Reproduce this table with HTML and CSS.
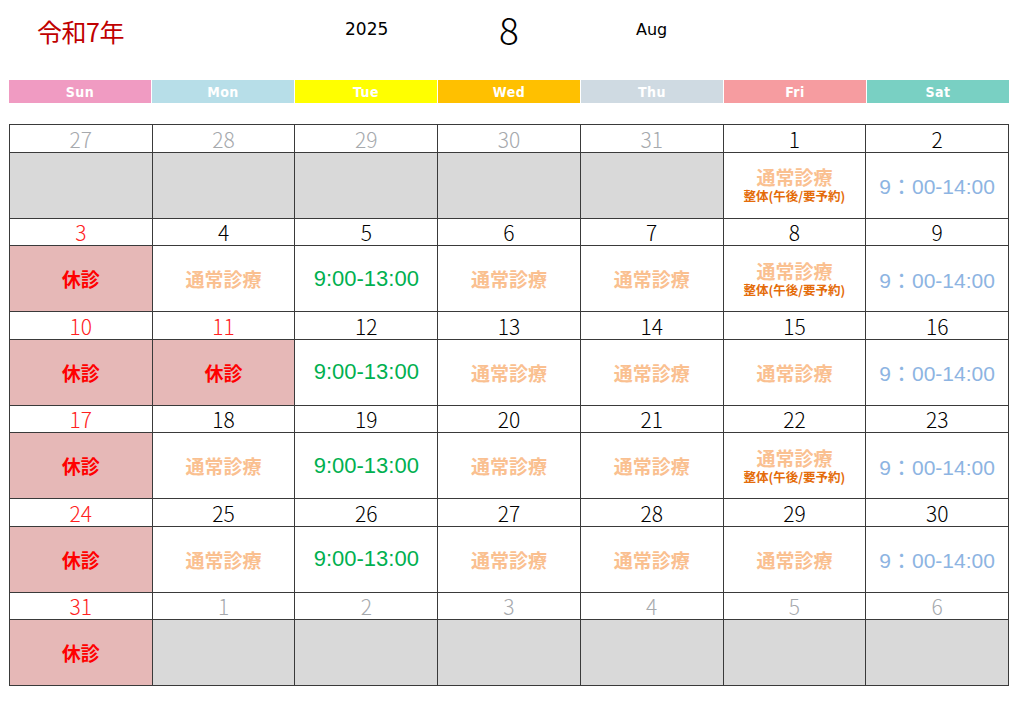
FILE: index.html
```html
<!DOCTYPE html>
<html lang="ja">
<head>
<meta charset="utf-8">
<title>令和7年 8月 カレンダー</title>
<link rel="stylesheet" href="styles.css">
</head>
<body>
<div class="page">
  <div class="title-row">
    <div class="era">令和7年</div>
    <div class="year">2025</div>
    <div class="month">8</div>
    <div class="month-en">Aug</div>
  </div>

  <div class="weekdays">
    <div class="wd sun">Sun</div>
    <div class="wd mon">Mon</div>
    <div class="wd tue">Tue</div>
    <div class="wd wed">Wed</div>
    <div class="wd thu">Thu</div>
    <div class="wd fri">Fri</div>
    <div class="wd sat">Sat</div>
  </div>

  <div class="cal">
    <!-- week 1 -->
    <div class="date other">27</div><div class="date other">28</div><div class="date other">29</div><div class="date other">30</div><div class="date other">31</div><div class="date">1</div><div class="date">2</div>
    <div class="cell empty"></div><div class="cell empty"></div><div class="cell empty"></div><div class="cell empty"></div><div class="cell empty"></div>
    <div class="cell two"><span class="normal">通常診療</span><span class="seitai">整体(午後/要予約)</span></div>
    <div class="cell"><span class="sat-time">9：00-14:00</span></div>
    <!-- week 2 -->
    <div class="date red">3</div><div class="date">4</div><div class="date">5</div><div class="date">6</div><div class="date">7</div><div class="date">8</div><div class="date">9</div>
    <div class="cell closed"><span class="kyu">休診</span></div>
    <div class="cell"><span class="normal">通常診療</span></div>
    <div class="cell"><span class="tue-time">9:00-13:00</span></div>
    <div class="cell"><span class="normal">通常診療</span></div>
    <div class="cell"><span class="normal">通常診療</span></div>
    <div class="cell two"><span class="normal">通常診療</span><span class="seitai">整体(午後/要予約)</span></div>
    <div class="cell"><span class="sat-time">9：00-14:00</span></div>
    <!-- week 3 -->
    <div class="date red">10</div><div class="date red">11</div><div class="date">12</div><div class="date">13</div><div class="date">14</div><div class="date">15</div><div class="date">16</div>
    <div class="cell closed"><span class="kyu">休診</span></div>
    <div class="cell closed"><span class="kyu">休診</span></div>
    <div class="cell"><span class="tue-time">9:00-13:00</span></div>
    <div class="cell"><span class="normal">通常診療</span></div>
    <div class="cell"><span class="normal">通常診療</span></div>
    <div class="cell"><span class="normal">通常診療</span></div>
    <div class="cell"><span class="sat-time">9：00-14:00</span></div>
    <!-- week 4 -->
    <div class="date red">17</div><div class="date">18</div><div class="date">19</div><div class="date">20</div><div class="date">21</div><div class="date">22</div><div class="date">23</div>
    <div class="cell closed"><span class="kyu">休診</span></div>
    <div class="cell"><span class="normal">通常診療</span></div>
    <div class="cell"><span class="tue-time">9:00-13:00</span></div>
    <div class="cell"><span class="normal">通常診療</span></div>
    <div class="cell"><span class="normal">通常診療</span></div>
    <div class="cell two"><span class="normal">通常診療</span><span class="seitai">整体(午後/要予約)</span></div>
    <div class="cell"><span class="sat-time">9：00-14:00</span></div>
    <!-- week 5 -->
    <div class="date red">24</div><div class="date">25</div><div class="date">26</div><div class="date">27</div><div class="date">28</div><div class="date">29</div><div class="date">30</div>
    <div class="cell closed"><span class="kyu">休診</span></div>
    <div class="cell"><span class="normal">通常診療</span></div>
    <div class="cell"><span class="tue-time">9:00-13:00</span></div>
    <div class="cell"><span class="normal">通常診療</span></div>
    <div class="cell"><span class="normal">通常診療</span></div>
    <div class="cell"><span class="normal">通常診療</span></div>
    <div class="cell"><span class="sat-time">9：00-14:00</span></div>
    <!-- week 6 -->
    <div class="date red">31</div><div class="date other">1</div><div class="date other">2</div><div class="date other">3</div><div class="date other">4</div><div class="date other">5</div><div class="date other">6</div>
    <div class="cell closed"><span class="kyu">休診</span></div>
    <div class="cell empty"></div><div class="cell empty"></div><div class="cell empty"></div><div class="cell empty"></div><div class="cell empty"></div><div class="cell empty"></div>
  </div>
</div>
</body>
</html>
```

FILE: styles.css
```css
* { box-sizing: border-box; }
html, body { margin: 0; padding: 0; background: #fff; }
body {
  font-family: "Liberation Sans", "Noto Sans CJK JP", sans-serif;
  color: #000;
}
.page {
  width: 1024px;
  height: 702px;
  padding: 0 15px 0 9px;
}

.title-row {
  position: relative;
  height: 80px;
}
.era {
  position: absolute;
  left: 28px;
  top: 13px;
  font-family: "Noto Sans CJK JP", sans-serif;
  font-size: 25px;
  color: #c00000;
  letter-spacing: -0.5px;
}
.year {
  position: absolute;
  left: 336px;
  top: 19px;
  font-family: "DejaVu Sans", "Noto Sans CJK JP", sans-serif;
  font-size: 17px;
}
.month {
  position: absolute;
  left: 490px;
  top: 2px;
  font-family: "Noto Sans CJK JP", sans-serif;
  font-weight: 300;
  font-size: 37px;
}
.month-en {
  position: absolute;
  left: 627px;
  top: 20px;
  font-family: "DejaVu Sans", sans-serif;
  font-size: 16px;
}

.weekdays {
  display: grid;
  grid-template-columns: repeat(7, 1fr);
  gap: 1px;
  width: 1000px;
  height: 23px;
}
.wd {
  display: flex;
  align-items: center;
  justify-content: center;
  color: #fff;
  font-family: "DejaVu Sans Condensed", "DejaVu Sans", sans-serif;
  font-stretch: condensed;
  font-weight: bold;
  font-size: 14px;
  letter-spacing: 0.5px;
}
.sun { background: #f09bc2; }
.mon { background: #b7dee8; }
.tue { background: #ffff00; }
.wed { background: #ffc000; }
.thu { background: #cfdae2; }
.fri { background: #f69ca0; }
.sat { background: #79d0c3; }

.cal {
  margin-top: 21px;
  width: 1000px;
  display: grid;
  grid-template-columns: repeat(7, 1fr);
  grid-template-rows: repeat(6, 26.5px 65px);
  gap: 1px;
  padding: 1px;
  background: #3a3a3a;
}
.date {
  background: #fff;
  display: flex;
  align-items: center;
  justify-content: center;
  font-family: "Noto Sans CJK JP", sans-serif;
  font-weight: 300;
  font-size: 21px;
  line-height: 1;
  color: #000;
  padding-top: 2px;
}
.date.other { color: #a6a9ad; }
.date.red { color: #ff2020; }

.cell {
  background: #fff;
  display: flex;
  flex-direction: column;
  align-items: center;
  justify-content: center;
}
.cell.two { gap: 1px; padding-bottom: 1px; }
.cell.empty { background: #d9d9d9; }
.cell.closed { background: #e6b8b7; }

.kyu {
  font-family: "Noto Sans CJK JP", sans-serif;
  font-weight: bold;
  font-size: 19px;
  color: #ff0000;
}
.normal {
  font-family: "Noto Sans CJK JP", sans-serif;
  font-weight: bold;
  font-size: 19px;
  line-height: 21px;
  color: #fac090;
}
.seitai {
  font-family: "Noto Sans CJK JP", sans-serif;
  font-weight: bold;
  font-size: 12.5px;
  line-height: 15px;
  color: #e46c0a;
}
.tue-time {
  font-family: "Liberation Sans", sans-serif;
  font-size: 22px;
  color: #00b050;
}
.sat-time {
  font-family: "Liberation Sans", "Noto Sans CJK JP", sans-serif;
  font-size: 21px;
  color: #8db4e2;
}
```
